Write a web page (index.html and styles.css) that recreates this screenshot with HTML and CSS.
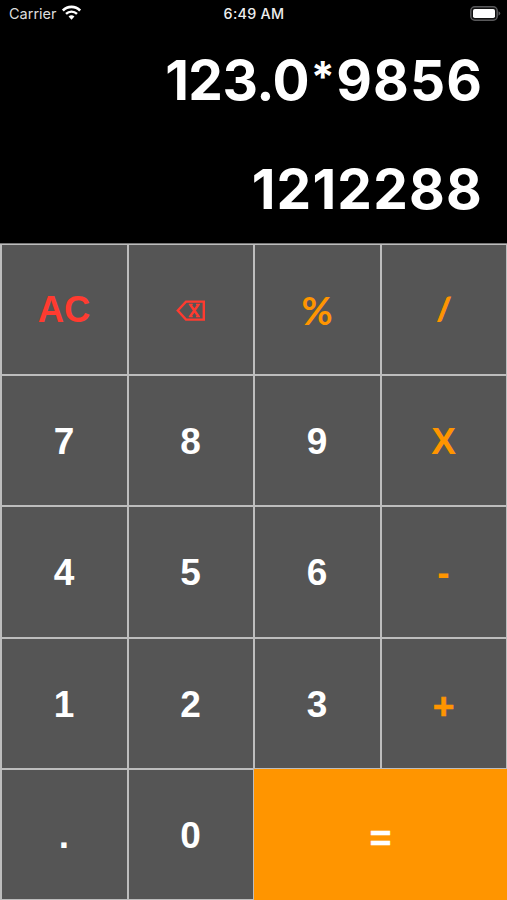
FILE: index.html
```html
<!DOCTYPE html>
<html lang="en">
<head>
<meta charset="utf-8">
<title>Calculator</title>
<link rel="stylesheet" href="styles.css">
</head>
<body>
<main class="app">
  <header class="status">
    <div class="carrier"><span>Carrier</span>
      <svg class="wifi" viewBox="0 0 18 14" fill="none" stroke="#fff"><path d="M.8 5.2C5.3.6 12.7.6 17.2 5.2" stroke-width="2.6"/><path d="M3.8 8.3c2.9-2.8 7.5-2.8 10.4 0" stroke-width="2.3"/><path d="M6.2 10.9Q9 8.5 11.8 10.9L9 13.8Z" fill="#fff" stroke="none"/></svg>
    </div>
    <time class="time">6:49 AM</time>
    <svg class="battery" viewBox="0 0 31 16"><rect x=".8" y=".8" width="26.4" height="13.4" rx="4" fill="#111" stroke="#59595b" stroke-width="1.5"/><rect x="3" y="3" width="22" height="9" rx="1.8" fill="#fff"/><path d="M28.5 5.3q3.6 2.2 0 4.4z" fill="#59595b"/></svg>
  </header>
  <section class="display">
    <output class="line expression"><span class="first">123.0</span><span class="times">*</span>9856</output>
    <output class="line result">1212288</output>
  </section>
  <section class="keypad">
    <button class="key clear">AC</button>
    <button class="key" aria-label="Delete"><svg class="delete" viewBox="0 0 30 21" fill="none" stroke="#ff3b30" stroke-width="2.4"><path d="M1.8 10.5 10 1.6h17.8v18H10Z"/><path d="M14.2 4.5 22.6 16.5M22.6 4.5 14.2 16.5" stroke-width="2.5"/><path d="M12.8 4.3h4M20 4.3h4M12.8 16.7h4M20 16.7h4" stroke-width="1.2"/></svg></button>
    <button class="key op percent">%</button>
    <button class="key op slash">/</button>
    <button class="key">7</button>
    <button class="key">8</button>
    <button class="key">9</button>
    <button class="key op">X</button>
    <button class="key">4</button>
    <button class="key">5</button>
    <button class="key">6</button>
    <button class="key op">-</button>
    <button class="key">1</button>
    <button class="key">2</button>
    <button class="key">3</button>
    <button class="key op plus">+</button>
    <button class="key">.</button>
    <button class="key">0</button>
    <button class="key equals">=</button>
  </section>
</main>
</body>
</html>
```
FILE: styles.css
```css
* { box-sizing: border-box; }
body { margin: 0; background: #000; }
.app {
  width: 507px;
  height: 900px;
  display: flex;
  flex-direction: column;
  overflow: hidden;
  color: #fff;
  font-family: Inter, sans-serif;
}
.status {
  height: 28px;
  display: grid;
  grid-template-columns: 1fr auto 1fr;
  align-items: center;
  padding: 0 6px 0 9px;
  font-size: 14.5px;
}
.carrier { display: flex; align-items: center; gap: 5px; margin-top: -1px; color: #ddd; }
.wifi { width: 19px; height: 15px; margin-top: -2px; }
.time { font-weight: 500; font-size: 14.3px; letter-spacing: .3px; margin: -1px 2px 0 0; color: #eee; }
.battery { width: 31px; height: 16px; justify-self: end; margin-top: -1px; }
.display { height: 215px; padding: 0 24px; }
.line {
  display: block;
  height: 109px;
  line-height: 105px;
  text-align: right;
  font-size: 55px;
  font-weight: 700;
}
.expression { letter-spacing: 1.1px; }
.result { letter-spacing: 1.2px; }
.first { letter-spacing: -.5px; }
.times {
  display: inline-block;
  width: 27px;
  font-size: 43px;
  line-height: 1;
  text-align: center;
  vertical-align: 8px;
  letter-spacing: 0;
}
.keypad {
  height: 657px;
  display: grid;
  grid-template-columns: 125px 124px 125px 124px;
  grid-template-rows: 129px 129px 130px 129px 129px;
  gap: 2px;
  padding: 1px 1px 1px 2px;
  background: #bdbdbd;
  border-top: 1px solid #777;
}
.key {
  display: flex;
  align-items: center;
  justify-content: center;
  margin: 0;
  padding: 1px 1px 0 0;
  border: 0;
  background: #555;
  color: #fff;
  font: bold 37px/1 "Liberation Sans", sans-serif;
}
.clear { color: #ff3b30; font-size: 36.5px; padding-top: 2px; }
.op { color: #ff9500; }
.percent { font: 700 38px/1 Lato, sans-serif; padding-top: 0; }
.slash {
  font: 700 31px/1 Lato, sans-serif;
  padding: 0 0 3px;
  -webkit-text-stroke: 1px #ff9500;
}
.plus { padding-top: 6px; -webkit-text-stroke: .6px #ff9500; }
.delete { width: 30px; height: 21px; }
.equals {
  grid-column: span 2;
  margin: -1px;
  padding: 7px 0 0;
  background: #ff9500;
  -webkit-text-stroke: .6px #fff;
}
```
